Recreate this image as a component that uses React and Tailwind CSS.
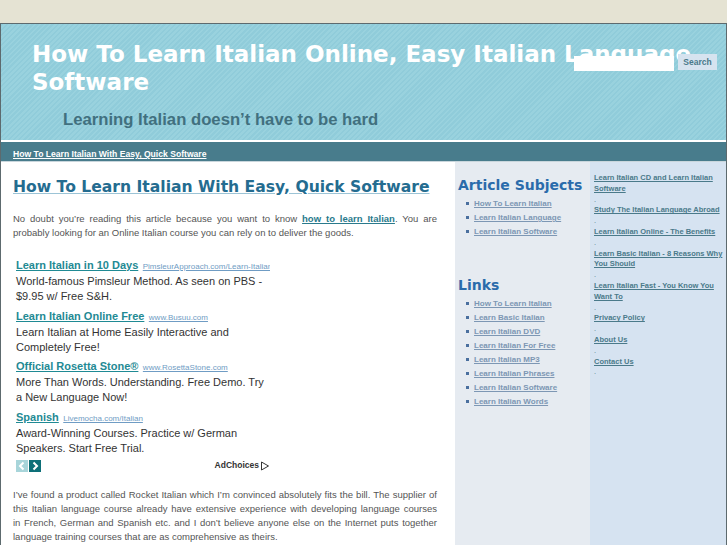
const sans = 'font-["Liberation_Sans",Arial,sans-serif]';
const dejavu = 'font-["DejaVu_Sans",Verdana,sans-serif]';

const subjects = ['How To Learn Italian', 'Learn Italian Language', 'Learn Italian Software'];
const links = [
  'How To Learn Italian',
  'Learn Basic Italian',
  'Learn Italian DVD',
  'Learn Italian For Free',
  'Learn Italian MP3',
  'Learn Italian Phrases',
  'Learn Italian Software',
  'Learn Italian Words',
];
const articles = [
  'Learn Italian CD and Learn Italian Software',
  'Study The Italian Language Abroad',
  'Learn Italian Online - The Benefits',
  'Learn Basic Italian - 8 Reasons Why You Should',
  'Learn Italian Fast - You Know You Want To',
  'Privacy Policy',
  'About Us',
  'Contact Us',
];
const ads = [
  { title: 'Learn Italian in 10 Days', url: 'PimsleurApproach.com/Learn-Italian', text: 'World-famous Pimsleur Method. As seen on PBS - $9.95 w/ Free S&H.' },
  { title: 'Learn Italian Online Free', url: 'www.Busuu.com', text: 'Learn Italian at Home Easily Interactive and Completely Free!' },
  { title: 'Official Rosetta Stone®', url: 'www.RosettaStone.com', text: 'More Than Words. Understanding. Free Demo. Try a New Language Now!' },
  { title: 'Spanish', url: 'Livemocha.com/Italian', text: 'Award-Winning Courses. Practice w/ German Speakers. Start Free Trial.' },
];

function SideList({ items }) {
  return (
    <ul className="mt-[4px] ml-[8px] flex flex-col gap-[3px]">
      {items.map((item) => (
        <li key={item} className="flex items-center gap-[5px] h-[11px] text-[8px] leading-[11px]">
          <span className="size-[3px] bg-[#4a6f9e] shrink-0" />
          <a className="font-bold text-[#7d97b4] underline">{item}</a>
        </li>
      ))}
    </ul>
  );
}

function AdUnit({ ad }) {
  return (
    <div className="mb-[2.5px]">
      <div className="h-[18px] leading-[16px] whitespace-nowrap overflow-hidden">
        <a className="text-[11px] font-bold text-[#1f8a94] underline">{ad.title}</a>{' '}
        <a className="text-[8px] text-[#6f9cc4] underline">{ad.url}</a>
      </div>
      <p className="w-[252px] text-[11px] leading-[15px] text-[#333]">{ad.text}</p>
    </div>
  );
}

function AdBlock() {
  return (
    <div className="ml-[3px] mt-[16px] w-[254px]">
      {ads.map((ad) => <AdUnit key={ad.title} ad={ad} />)}
      <div className="flex items-center mt-[4px] h-[12px]">
        <span className="size-[12px] bg-[#a8d5da] flex items-center justify-center">
          <svg viewBox="0 0 12 12" className="size-[12px]"><path d="M7.5 2.5 4 6l3.5 3.5" fill="none" stroke="#fff" strokeWidth="2" /></svg>
        </span>
        <span className="size-[12px] ml-[1px] bg-[#0d6f78] flex items-center justify-center">
          <svg viewBox="0 0 12 12" className="size-[12px]"><path d="M4.5 2.5 8 6 4.5 9.5" fill="none" stroke="#fff" strokeWidth="2" /></svg>
        </span>
        <span className="ml-auto flex items-center gap-px text-[8.5px] font-bold text-[#333]">
          AdChoices
          <svg viewBox="0 0 10 10" className="size-[10px]"><path d="M1.5 1v8l7-4z" fill="none" stroke="#333" strokeWidth="1" /></svg>
        </span>
      </div>
    </div>
  );
}

export default function App() {
  return (
    <div className={`h-[545px] w-[727px] overflow-hidden bg-[#e5e3d3] pt-[23px] ${sans}`}>
      <div className="h-full border-t border-x border-[#5d6a6e] bg-white">
        <header className="relative h-[116px] bg-[#93cedc] bg-[repeating-linear-gradient(135deg,#90ccda_0px,#90ccda_1.8px,#99d2de_1.8px,#99d2de_3.6px)] pl-[31px] pt-[16px]">
          <h1 className={`${dejavu} text-[23px] leading-[28px] font-bold text-white w-[680px]`}>
            How To Learn Italian Online, Easy Italian Language Software
          </h1>
          <h2 className="ml-[31px] mt-[13px] text-[16.7px] leading-[22px] font-bold text-[#41707f]">
            Learning Italian doesn’t have to be hard
          </h2>
          <div className="absolute left-[573px] top-[30px] flex items-start">
            <span className="mt-[2px] w-[100px] h-[15px] bg-white" />
            <span className="ml-[4px] w-[39px] h-[16px] bg-[#d6e3ef] text-[8.5px] leading-[16px] font-bold text-center text-[#4a7a8a]">Search</span>
          </div>
        </header>
        <nav className="border-t-2 border-white h-[21px] bg-[#487c8c] pl-[12px] pt-[6px] text-[8.6px] leading-[13px]">
          <a className="font-bold text-white underline">How To Learn Italian With Easy, Quick Software</a>
        </nav>
        <div className="flex h-[384px] border-t border-[#c9d6dc]">
          <main className="w-[454px] pl-[12px] pr-[18px] pt-[15px]">
            <h2 className={`${dejavu} text-[15.6px] leading-[20px] font-bold text-[#246c90] underline decoration-[#9cc4d6] whitespace-nowrap`}>
              How To Learn Italian With Easy, Quick Software
            </h2>
            <p className="mt-[15px] text-[9.5px] leading-[14px] text-[#555] text-justify">
              No doubt you’re reading this article because you want to know <a className="font-bold text-[#2a7a8c] underline">how to learn Italian</a>. You are probably looking for an Online Italian course you can rely on to deliver the goods.
            </p>
            <AdBlock />
            <p className="mt-[16px] text-[9.5px] leading-[14px] text-[#555] text-justify">
              I’ve found a product called Rocket Italian which I’m convinced absolutely fits the bill. The supplier of this Italian language course already have extensive experience with developing language courses in&nbsp;French, German and Spanish etc. and I don’t believe anyone else on the Internet puts together language training courses that are as comprehensive as theirs.
            </p>
          </main>
          <aside className="w-[135px] bg-[#e6ebf1] pl-[3px] pt-[14px]">
            <h3 className={`${dejavu} text-[14px] leading-[18px] font-bold text-[#2a6bab] whitespace-nowrap`}>Article Subjects</h3>
            <SideList items={subjects} />
            <h3 className={`${dejavu} mt-[39px] text-[14px] leading-[18px] font-bold text-[#2a6bab]`}>Links</h3>
            <SideList items={links} />
          </aside>
          <aside className="flex-1 bg-[#d6e3f1] pl-[4px] pt-[11px] text-[7.5px] leading-[10.8px] text-[#4a7a8a]">
            {articles.map((item) => (
              <div key={item}>
                <a className="font-bold underline">{item}</a>
                <div>.</div>
              </div>
            ))}
          </aside>
        </div>
      </div>
    </div>
  );
}
